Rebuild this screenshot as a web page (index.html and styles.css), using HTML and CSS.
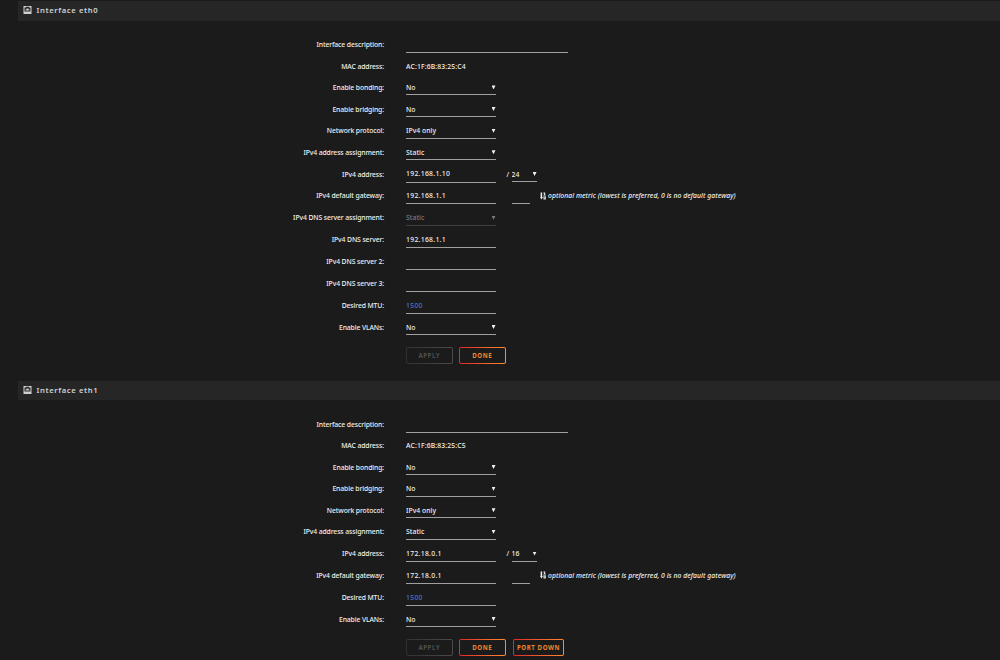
FILE: index.html
```
<!DOCTYPE html>
<html lang="en">
<head>
  <meta charset="UTF-8">
  <meta name="viewport" content="width=device-width, initial-scale=1.0">
  <title>Network Settings</title>
  <link rel="stylesheet" href="styles.css">
</head>
<body>
  <svg class="defs" width="0" height="0">
    <symbol id="port" viewBox="0 0 16 16">
      <path fill="currentColor" fill-rule="evenodd" d="M0 0h16v16H0zM2 3v8h12V3h-3V1.500H5V3z"/>
      <path fill="currentColor" d="M4 7h2V5h4v2h2v2H4z"/>
    </symbol>
    <symbol id="sort" viewBox="0 0 14 16">
      <path fill="currentColor" d="M1.500 0h3.500v11h2l-3.500 5L0 11h1.500z"/>
      <path fill="currentColor" fill-rule="evenodd" d="M8 0h4v5h1.500v2H8V5h1.500V2H8zM8 8.500h5.500V16H8v-2h3v-1H8zm2 1.500v1.500h1.500V10z"/>
    </symbol>
  </svg>

  <section class="interface">
    <h2 class="title"><svg class="icon"><use href="#port"/></svg>Interface eth0</h2>
    <form class="settings">
      <div class="row"><label>Interface description:</label><input class="wide" type="text"></div>
      <div class="row mac"><label>MAC address:</label><span>AC:1F:6B:83:25:C4</span></div>
      <div class="row pick"><label>Enable bonding:</label><div class="select"><select><option>No</option></select></div></div>
      <div class="row pick"><label>Enable bridging:</label><div class="select"><select><option>No</option></select></div></div>
      <div class="row pick"><label>Network protocol:</label><div class="select"><select><option>IPv4 only</option></select></div></div>
      <div class="row pick"><label>IPv4 address assignment:</label><div class="select"><select><option>Static</option></select></div></div>
      <div class="row">
        <label>IPv4 address:</label><input type="text" value="192.168.1.10">
        <span class="slash">/</span><div class="select mask"><select><option>24</option></select></div>
      </div>
      <div class="row">
        <label>IPv4 default gateway:</label><input type="text" value="192.168.1.1">
        <input class="metric" type="text">
        <svg class="sort"><use href="#sort"/></svg><i>optional metric (lowest is preferred, 0 is no default gateway)</i>
      </div>
      <div class="row"><label>IPv4 DNS server assignment:</label><div class="select off"><select disabled><option>Static</option></select></div></div>
      <div class="row"><label>IPv4 DNS server:</label><input type="text" value="192.168.1.1"></div>
      <div class="row"><label>IPv4 DNS server 2:</label><input type="text"></div>
      <div class="row"><label>IPv4 DNS server 3:</label><input type="text"></div>
      <div class="row"><label>Desired MTU:</label><input type="text" placeholder="1500"></div>
      <div class="row pick"><label>Enable VLANs:</label><div class="select"><select><option>No</option></select></div></div>
      <div class="buttons">
        <button type="button" disabled>Apply</button>
        <button type="button">Done</button>
      </div>
    </form>
  </section>

  <section class="interface">
    <h2 class="title"><svg class="icon"><use href="#port"/></svg>Interface eth1</h2>
    <form class="settings">
      <div class="row"><label>Interface description:</label><input class="wide" type="text"></div>
      <div class="row mac"><label>MAC address:</label><span>AC:1F:6B:83:25:C5</span></div>
      <div class="row pick"><label>Enable bonding:</label><div class="select"><select><option>No</option></select></div></div>
      <div class="row pick"><label>Enable bridging:</label><div class="select"><select><option>No</option></select></div></div>
      <div class="row pick"><label>Network protocol:</label><div class="select"><select><option>IPv4 only</option></select></div></div>
      <div class="row pick"><label>IPv4 address assignment:</label><div class="select"><select><option>Static</option></select></div></div>
      <div class="row">
        <label>IPv4 address:</label><input type="text" value="172.18.0.1">
        <span class="slash">/</span><div class="select mask"><select><option>16</option></select></div>
      </div>
      <div class="row">
        <label>IPv4 default gateway:</label><input type="text" value="172.18.0.1">
        <input class="metric" type="text">
        <svg class="sort"><use href="#sort"/></svg><i>optional metric (lowest is preferred, 0 is no default gateway)</i>
      </div>
      <div class="row"><label>Desired MTU:</label><input type="text" placeholder="1500"></div>
      <div class="row pick"><label>Enable VLANs:</label><div class="select"><select><option>No</option></select></div></div>
      <div class="buttons">
        <button type="button" disabled>Apply</button>
        <button type="button">Done</button>
        <button class="port" type="button">Port Down</button>
      </div>
    </form>
  </section>
</body>
</html>
```
FILE: styles.css
```
* {
  box-sizing: border-box;
}
body {
  margin: 0;
  padding: 1px 0 0 18px;
  height: 660px;
  overflow: hidden;
  background: #1b1b1b;
  color: #f0f0f0;
  font-family: "Noto Sans", sans-serif;
  font-size: 6.8px;
  font-weight: 500;
  letter-spacing: -0.1px;
}
.defs {
  display: block;
}
.title {
  display: flex;
  align-items: center;
  height: 19.5px;
  margin: 0;
  padding: 0 0 1.5px 5px;
  background: #262626;
  color: #d0d0d0;
  font-size: 7.7px;
  font-weight: 600;
  letter-spacing: 0.6px;
}
.icon {
  width: 9px;
  height: 8px;
  margin-right: 4.5px;
}
.settings {
  padding: 13px 0 16.2px;
}
.row {
  display: flex;
  align-items: center;
  height: 21.9px;
}
.row.mac {
  height: 21.3px;
}
.row.pick {
  height: 21.6px;
}
.row.mac span {
  letter-spacing: 0.14px;
}
label {
  flex: none;
  width: 366px;
  margin-right: 22px;
  text-align: right;
}
input, select {
  margin: 0;
  padding: 0;
  border: 0;
  border-radius: 0;
  outline: 0;
  background: none;
  color: inherit;
  font: inherit;
  appearance: none;
}
input {
  width: 89.5px;
  height: 17px;
  padding-top: 0.5px;
  border-bottom: 1px solid #a0a0a0;
  letter-spacing: 0.3px;
}
input::placeholder {
  color: #4a74c8;
  opacity: 1;
}
.wide {
  width: 162px;
}
.metric {
  width: 18px;
  margin-left: 16.5px;
}
.select {
  position: relative;
  width: 89.5px;
  height: 16px;
  border-bottom: 1px solid #a0a0a0;
}
.select select {
  display: block;
  width: 100%;
  height: 15px;
  padding-top: 1px;
  letter-spacing: 0.05px;
}
.select::after {
  content: "";
  position: absolute;
  top: 6px;
  right: 0;
  width: 4px;
  height: 4px;
  background: #f2f2f2;
  clip-path: polygon(0 0, 100% 0, 50% 100%);
}
.select.off {
  border-color: #404040;
  color: #7c7c7c;
}
.select.off::after {
  background: #7c7c7c;
}
.select select:disabled {
  opacity: 1;
}
.slash {
  margin: 0 2.5px 0 11px;
}
.select.mask {
  width: 25px;
}
.sort {
  flex: none;
  width: 6px;
  height: 8px;
  margin: 0 2px 0 10px;
}
.row i {
  letter-spacing: 0.05px;
  white-space: nowrap;
}
.buttons {
  display: flex;
  gap: 6.5px;
  padding: 9px 0 0 388px;
}
button {
  width: 46.5px;
  height: 17.5px;
  padding: 0;
  border: 1px solid transparent;
  border-radius: 2px;
  background: linear-gradient(#1b1b1b, #1b1b1b) padding-box, linear-gradient(90deg, #e22828, #ff8c2f) border-box;
  color: #f0862f;
  font: 700 6.1px "Noto Sans", sans-serif;
  letter-spacing: 0.58px;
  text-transform: uppercase;
  white-space: nowrap;
}
button:disabled {
  background: linear-gradient(#1b1b1b, #1b1b1b) padding-box, linear-gradient(90deg, #303030, #4a4a4a) border-box;
  color: #4f4f4f;
}
.port {
  width: 51px;
  margin-left: 1px;
}
```
